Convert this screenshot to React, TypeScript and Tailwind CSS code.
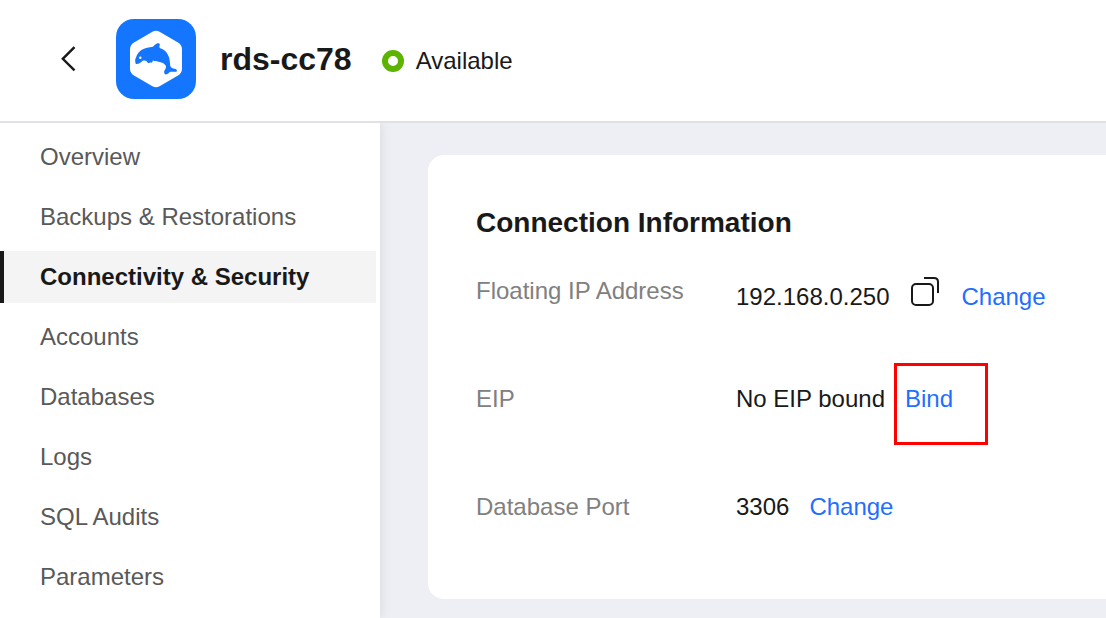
interface NavItem {
  label: string;
  href: string;
  active?: boolean;
}

const NAV_ITEMS: NavItem[] = [
  { label: "Overview", href: "#overview" },
  { label: "Backups & Restorations", href: "#backups" },
  { label: "Connectivity & Security", href: "#connectivity", active: true },
  { label: "Accounts", href: "#accounts" },
  { label: "Databases", href: "#databases" },
  { label: "Logs", href: "#logs" },
  { label: "SQL Audits", href: "#sql-audits" },
  { label: "Parameters", href: "#parameters" },
];

function EngineLogo() {
  return (
    <svg viewBox="0 0 80 80" className="size-20 shrink-0" aria-hidden="true">
      <rect width="80" height="80" rx="18" fill="#1476ff" />
      <path
        d="M36 13Q40 10.6 44 13L62 23.4Q66 25.8 66 30.4V49.6Q66 54.2 62 56.6L44 67Q40 69.4 36 67L18 56.6Q14 54.2 14 49.6V30.4Q14 25.8 18 23.4Z"
        fill="#fff"
      />
      <path
        d="M19.8 45C18.8 42.4 19 39.8 20.2 38C21.4 33.6 25.6 29.8 30.4 28.9C33 28.4 35.4 28.4 36.8 27.8C38.2 26.8 39 25 41 24.4C42.6 23.9 44.2 24.6 43.8 26C43.4 27.2 43.2 28 43.8 28.9C46 29.6 48.6 31 50.2 33C52.8 36.4 54 40.4 54 45C54 47.6 55.2 49 57.4 49.4C59.6 49.4 61 50.4 61 52C60.2 53.2 57.4 52.8 54.6 52.8C52.8 53.2 52.4 55.2 49.8 55.6C48.2 55 47.6 52.8 48.6 51.2C49.8 49.8 50.4 48.4 49.8 46.8C48.8 44.6 46.4 43.4 43.4 42.9C41.2 42.6 38.8 42.6 36.8 41.6C36.6 43.2 36 44 34.6 43.6C33.4 43.6 33 44.6 31.8 43.8C31 43 30.8 42 29.6 41.8C28.4 41.6 27.4 41.2 26.4 42C25 43.6 23 45.2 19.8 45Z"
        fill="#1476ff"
      />
      <circle cx="24.3" cy="38.7" r="1.2" fill="#fff" />
    </svg>
  );
}

function Header() {
  return (
    <header className="z-20 flex items-center border-b-2 border-[#dfe1e6] bg-white pt-[19px] pb-[22px] pl-14">
      <button type="button" aria-label="Back" className="mr-9 flex size-6 items-center justify-center">
        <svg viewBox="0 0 24 28" className="h-7 w-6 shrink-0" fill="none" stroke="#191919" strokeWidth="2.4" aria-hidden="true">
          <path d="M18.5 2.2L6.8 13.8L18.5 25.4" />
        </svg>
      </button>
      <EngineLogo />
      <h1 className="ml-6 text-[32px] leading-10 font-bold">rds-cc78</h1>
      <div className="ml-[30px] flex items-center gap-3 pt-1">
        <span className="size-[22px] rounded-full border-6 border-[#5cb300]" />
        <span>Available</span>
      </div>
    </header>
  );
}

function Sidebar() {
  return (
    <nav className="z-10 flex w-[380px] shrink-0 flex-col gap-2 bg-white pt-2 pr-1 shadow-[0_0_12px_rgba(0,0,0,0.1)]">
      {NAV_ITEMS.map((item) => (
        <a
          key={item.label}
          href={item.href}
          className={`flex h-13 items-center border-l-4 pl-9 ${
            item.active ? "border-[#191919] bg-[#f4f4f4] font-bold" : "border-transparent text-[#595959]"
          }`}
        >
          {item.label}
        </a>
      ))}
    </nav>
  );
}

function CopyButton() {
  return (
    <button type="button" aria-label="Copy" className="-mt-3">
      <svg viewBox="0 0 30 30" className="size-[30px]" fill="none" stroke="#191919" strokeWidth="2" aria-hidden="true">
        <rect x="2" y="8" width="21" height="21" rx="4" />
        <path d="M14 2H24Q28 2 28 6V17" />
      </svg>
    </button>
  );
}

export default function App() {
  return (
    <div className="flex min-h-screen flex-col font-['Liberation_Sans',Arial,sans-serif] text-2xl leading-9 text-[#191919]">
      <Header />
      <div className="flex flex-1">
        <Sidebar />
        <main className="min-w-0 flex-1 bg-[#edeff5] pt-8 pl-12">
          <section className="rounded-l-2xl bg-white pt-[50px] pb-0.5 pl-12">
            <h2 className="text-[28px] leading-9 font-bold">Connection Information</h2>
            <dl className="mt-8 grid auto-rows-[108px] grid-cols-[260px_1fr]">
              <dt className="text-[#808080]">Floating IP Address</dt>
              <dd className="flex h-12 items-center gap-[21px]">
                <span>192.168.0.250</span>
                <CopyButton />
                <a href="#change-ip" className="text-[#1f6fff]">Change</a>
              </dd>

              <dt className="text-[#808080]">EIP</dt>
              <dd className="flex items-start gap-5">
                <span>No EIP bound</span>
                <a href="#bind" className="relative text-[#1f6fff]">
                  Bind
                  {/* highlight frame */}
                  <span className="absolute -top-[18px] -left-[11px] h-[82px] w-[94px] border-3 border-[#ff0000]" />
                </a>
              </dd>

              <dt className="text-[#808080]">Database Port</dt>
              <dd className="flex items-start gap-5">
                <span>3306</span>
                <a href="#change-port" className="text-[#1f6fff]">Change</a>
              </dd>
            </dl>
          </section>
        </main>
      </div>
    </div>
  );
}
